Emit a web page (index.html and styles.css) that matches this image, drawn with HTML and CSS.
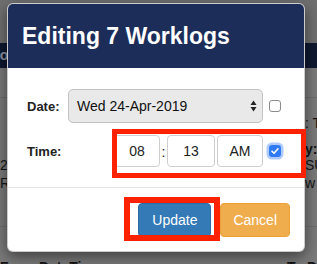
FILE: index.html
```html
<!DOCTYPE html>
<html>
<head>
<meta charset="utf-8">
<title>Editing 7 Worklogs</title>
<link rel="stylesheet" href="styles.css">
</head>
<body>
<div class="page">
  <div class="topstrip"></div>
  <div class="navbar"><span class="nav-title">Worklogs</span></div>
  <div class="sp1"></div>
  <div class="brow r1"><span class="bl"></span><span class="br">: Task</span></div>
  <div class="brow r2"><span class="bl"></span><span class="br bold">y: 7</span></div>
  <div class="brow r3"><span class="bl">2019</span><span class="br">SUN</span></div>
  <div class="brow r4"><span class="bl">Recent</span><span class="br">w 2019</span></div>
  <div class="sp2"></div>
  <div class="brow r5 bold"><span class="bl">From DateTime</span><span class="bto">To DateTime</span></div>
</div>

<div class="modal">
  <div class="modal-header">
    <h4 class="modal-title">Editing 7 Worklogs</h4>
  </div>
  <div class="modal-body">
    <div class="form-row">
      <label class="lbl lbl-date">Date:</label>
      <div class="select">
        <span class="select-text">Wed 24-Apr-2019</span>
        <svg class="select-arrows" width="7" height="12" viewBox="0 0 7 12"><polygon points="0.5,5 3.5,0.5 6.5,5" fill="#222"/><polygon points="0.5,7 3.5,11.5 6.5,7" fill="#222"/></svg>
      </div>
      <span class="cb"></span>
    </div>
    <div class="form-row time-row">
      <label class="lbl lbl-time">Time:</label>
      <div class="tin tin-h">08</div>
      <span class="colon">:</span>
      <div class="tin tin-m">13</div>
      <div class="tin tin-ap">AM</div>
      <span class="cb cb-on"><svg width="12" height="12" viewBox="0 0 12 12"><polyline points="3,6.3 5,8.3 9,3.8" fill="none" stroke="#fff" stroke-width="1.6" stroke-linecap="round" stroke-linejoin="round"/></svg></span>
    </div>
  </div>
  <div class="modal-footer">
    <button class="btn btn-primary">Update</button>
    <button class="btn btn-warning">Cancel</button>
  </div>
</div>

<div class="mark mark-time"></div>
<div class="mark mark-update"></div>
</body>
</html>
```

FILE: styles.css
```css
* { box-sizing: border-box; }
html, body { margin: 0; padding: 0; }
body {
  width: 317px;
  height: 264px;
  overflow: hidden;
  position: relative;
  font-family: "Liberation Sans", Arial, sans-serif;
  background: #7b7b7b;
}

/* dimmed page behind the modal */
.page { height: 264px; font-size: 14px; color: #141414; }
.topstrip { height: 43px; background: #707070; }
.navbar {
  height: 25px;
  background: #0f1830;
  color: #8d93a3;
  font-size: 14px;
  font-weight: bold;
  line-height: 25px;
  white-space: nowrap;
  overflow: hidden;
}
.nav-title { display: inline-block; margin-left: -39px; }
.sp1 { height: 30px; border-bottom: 1px solid #6e6e6e; }
.sp2 { height: 36px; border-bottom: 1px solid #6e6e6e; }
.brow {
  display: grid;
  grid-template-columns: 305px 1fr;
  height: 16px;
  line-height: 16px;
  white-space: nowrap;
  overflow: hidden;
}
.bl { overflow: hidden; }
.br { overflow: hidden; }
.bold { font-weight: bold; }
.r1 { margin-top: 17px; }
.r2 { margin-top: 10px; }
.r3 { margin-top: 0; }
.r4 { margin-top: 2px; }
.r5 { margin-top: 32px; grid-template-columns: 287px 1fr; }

/* modal */
.modal {
  position: absolute;
  left: 7px;
  top: 3px;
  width: 298px;
  background: #fff;
  border: 1px solid rgba(0,0,0,0.2);
  border-radius: 6px;
  overflow: hidden;
  box-shadow: 0 5px 15px rgba(0,0,0,0.5);
}
.modal-header {
  background: #1d2d59;
  padding: 15px 14px;
}
.modal-title {
  margin: 0;
  color: #fff;
  font-size: 23px;
  font-weight: bold;
  line-height: 34px;
}
.modal-body { padding: 21px 14px 20px 19px; }
.form-row { display: flex; align-items: center; height: 34px; }
.time-row { height: 32px; margin-top: 12px; }
.lbl { font-size: 13px; font-weight: bold; color: #222; }
.lbl-date { width: 41px; }
.lbl-time { width: 87px; }
.select {
  width: 195px;
  height: 34px;
  display: flex;
  align-items: center;
  justify-content: space-between;
  padding: 0 5px 0 8px;
  background: #e9e9e9;
  border: 1px solid #c3c3c3;
  border-radius: 5px;
  font-size: 14px;
  color: #111;
}
.cb {
  width: 12px;
  height: 12px;
  margin-left: 6px;
  border: 1px solid #8c8c8c;
  border-radius: 3px;
  background: #fff;
  flex: none;
}
.cb-on {
  display: flex;
  border: none;
  background: #2f7bf5;
  box-shadow: 0 0 0 2.5px rgba(110,160,250,0.55);
}
.cb-on svg { display: block; }
.tin {
  height: 32px;
  border: 1px solid #cfcfcf;
  border-radius: 4px;
  display: flex;
  align-items: center;
  justify-content: center;
  font-size: 14px;
  color: #222;
  background: #fff;
}
.tin-h { width: 46px; }
.colon { width: 7px; text-align: center; font-size: 14px; color: #222; padding-top: 2px; }
.tin-m { width: 48px; }
.tin-ap { width: 46px; margin-left: 2px; }

.modal-footer {
  border-top: 1px solid #e5e5e5;
  padding: 15px 14px 14px;
  display: flex;
  justify-content: flex-end;
  gap: 9px;
}
.btn {
  font-family: "Liberation Sans", Arial, sans-serif;
  font-size: 14px;
  line-height: 20px;
  padding: 6px 12px;
  border: 1px solid transparent;
  border-radius: 4px;
  color: #fff;
}
.btn-primary { background: #337ab7; border-color: #2e6da4; width: 73px; }
.btn-warning { background: #f0ad4e; border-color: #eea236; }

/* red annotation frames drawn over the screenshot */
.mark { position: absolute; border-style: solid; border-color: #fe2200; }
.mark-time { left: 112px; top: 129px; width: 194px; height: 49px; border-width: 5px; }
.mark-update { left: 124px; top: 197px; width: 96px; height: 44px; border-width: 6px; }
```
